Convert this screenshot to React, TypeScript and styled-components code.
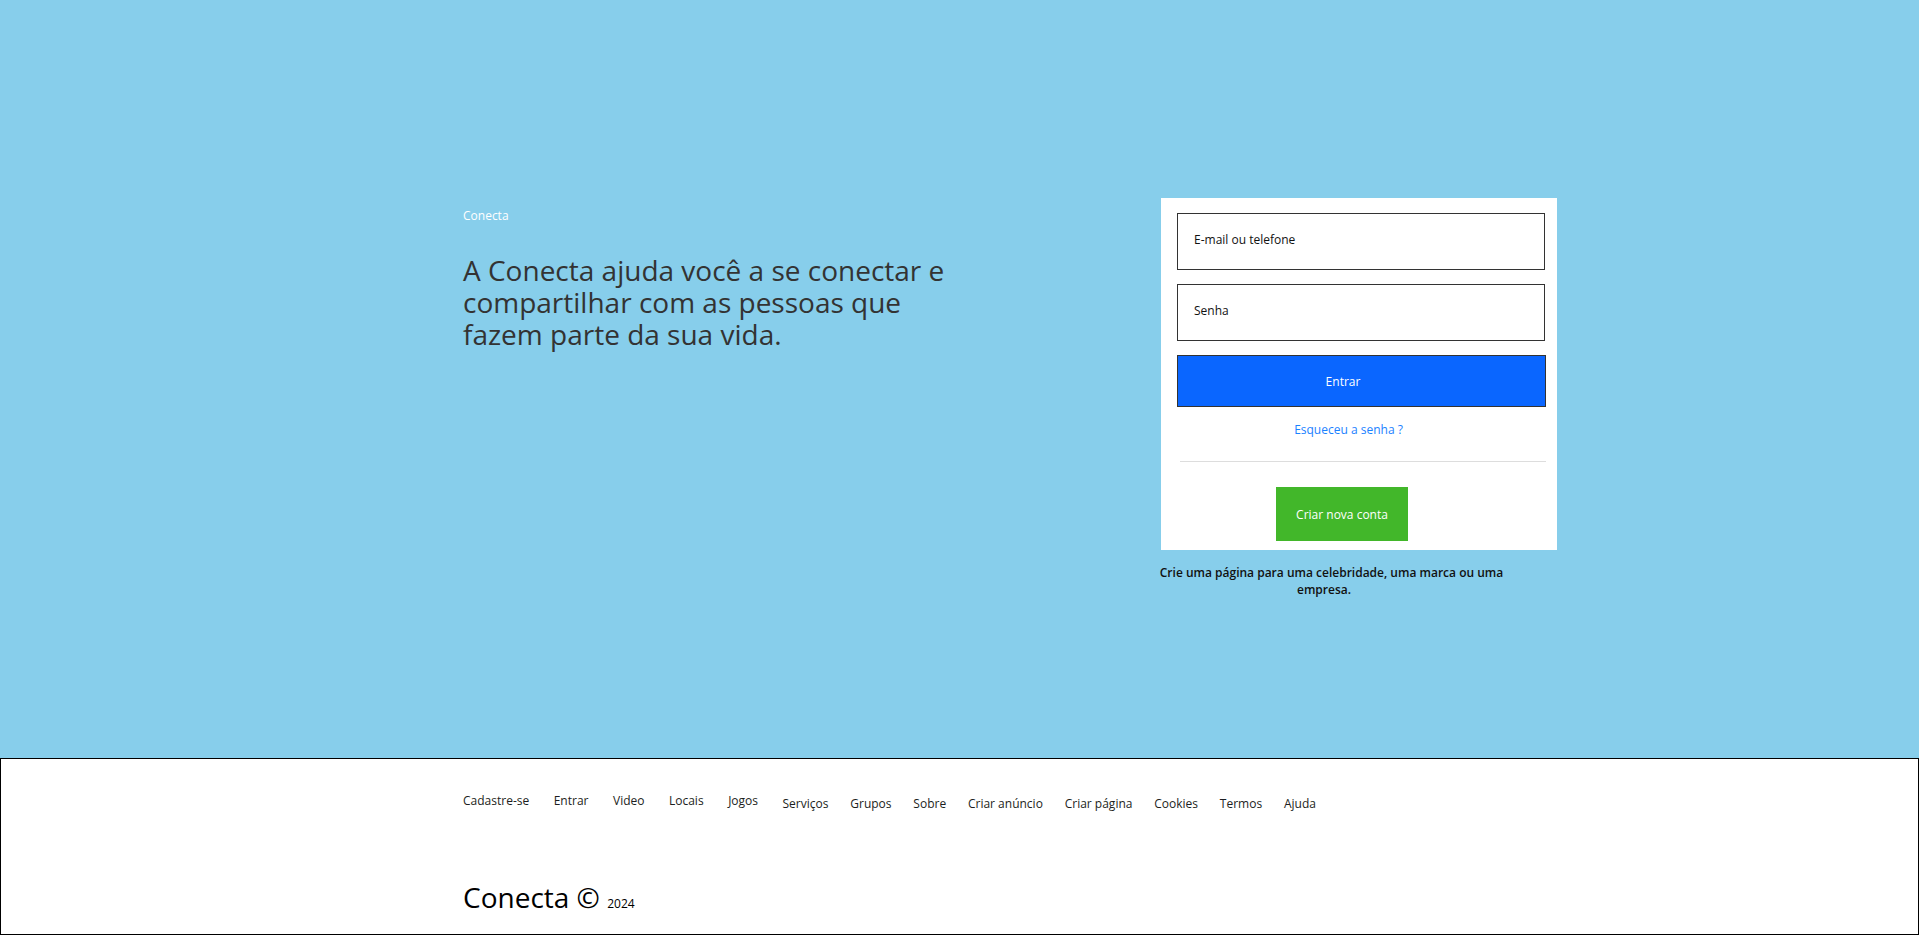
import styled, { createGlobalStyle } from 'styled-components';

const GlobalStyle = createGlobalStyle`
  * {
    box-sizing: border-box;
  }

  body {
    margin: 0;
    font-family: 'Open Sans', 'Noto Sans', sans-serif;
    background-color: #87ceeb;
  }
`;

const footerLinks = [
  { name: 'Cadastre-se', raised: true },
  { name: 'Entrar', raised: true },
  { name: 'Video', raised: true },
  { name: 'Locais', raised: true },
  { name: 'Jogos', raised: true },
  { name: 'Serviços', raised: false },
  { name: 'Grupos', raised: false },
  { name: 'Sobre', raised: false },
  { name: 'Criar anúncio', raised: false },
  { name: 'Criar página', raised: false },
  { name: 'Cookies', raised: false },
  { name: 'Termos', raised: false },
  { name: 'Ajuda', raised: false },
];

const App = () => {
  return (
    <>
      <GlobalStyle />
      <Main>
        <Intro>
          <Brand>Conecta</Brand>
          <Headline>
            A Conecta ajuda você a se conectar e compartilhar com as pessoas que fazem parte da sua vida.
          </Headline>
        </Intro>
        <LoginColumn>
          <Card>
            <Field type='text' placeholder='E-mail ou telefone' />
            <Field type='password' placeholder='Senha' />
            <LoginButton type='button'>Entrar</LoginButton>
            <Forgot href='#'>Esqueceu a senha ?</Forgot>
            <Divider />
            <CreateButton type='button'>Criar nova conta</CreateButton>
          </Card>
          <PageNote>Crie uma página para uma celebridade, uma marca ou uma empresa.</PageNote>
        </LoginColumn>
      </Main>
      <Footer>
        <FooterNav>
          {footerLinks.map(link => (
            <FooterLink key={link.name} href='#' $raised={link.raised}>
              {link.name}
            </FooterLink>
          ))}
        </FooterNav>
        <Copyright>
          Conecta © <small>2024</small>
        </Copyright>
      </Footer>
    </>
  );
};

const Main = styled.main`
  display: flex;
  height: 758px;
  padding: 198px 0 0 463px;
  background-color: #87ceeb;
`;

const Intro = styled.section`
  width: 698px;
  flex-shrink: 0;
  padding-top: 9px;
`;

const Brand = styled.div`
  font-size: 12px;
  color: #fff;
`;

const Headline = styled.h2`
  width: 500px;
  margin: 30px 0 0;
  font-size: 28px;
  font-weight: 400;
  line-height: 32px;
  color: #333;
`;

const LoginColumn = styled.section`
  width: 396px;
  flex-shrink: 0;
`;

const Card = styled.div`
  display: flex;
  flex-direction: column;
  padding: 15px 11px 9px 16px;
  background-color: #fff;
`;

const Field = styled.input`
  width: 368px;
  height: 57px;
  margin-bottom: 14px;
  padding: 0 16px 4px;
  border: 1px solid #333;
  font-family: inherit;
  font-size: 12px;
  outline: none;

  &::placeholder {
    color: #111;
  }
`;

const LoginButton = styled.button`
  width: 369px;
  height: 52px;
  padding: 0 37px 0 0;
  border: 1px solid #333;
  background-color: #0a66ff;
  font-family: inherit;
  font-size: 12px;
  color: #fff;
  cursor: pointer;
`;

const Forgot = styled.a`
  width: 369px;
  margin-top: 14px;
  padding-right: 26px;
  font-size: 12px;
  color: #1a82ff;
  text-align: center;
  text-decoration: none;
`;

const Divider = styled.hr`
  width: 366px;
  margin: 23px 0 0 3px;
  border: none;
  border-top: 1px solid #ddd;
`;

const CreateButton = styled.button`
  align-self: flex-start;
  width: 132px;
  height: 54px;
  margin: 25px 0 0 99px;
  padding: 0;
  border: none;
  background-color: #42b72a;
  font-family: inherit;
  font-size: 12px;
  color: #fff;
  cursor: pointer;
`;

const PageNote = styled.p`
  width: 360px;
  margin: 14px 0 0 -17px;
  font-size: 12px;
  font-weight: 600;
  color: #111;
  text-align: center;
  text-indent: 15px;
`;

const Footer = styled.footer`
  height: 177px;
  padding: 33px 0 0 462px;
  border: 1px solid #000;
  background-color: #fff;
`;

const FooterNav = styled.nav`
  display: flex;
  align-items: flex-start;
`;

const FooterLink = styled.a<{ $raised: boolean }>`
  margin-top: ${({ $raised }) => ($raised ? '0' : '3px')};
  margin-right: ${({ $raised }) => ($raised ? '24.5px' : '21.8px')};
  font-size: 12px;
  color: #1c1e21;
  text-decoration: none;
`;

const Copyright = styled.div`
  margin-top: 66px;
  font-size: 28px;
  color: #000;

  small {
    font-size: 12px;
  }
`;

export default App;
